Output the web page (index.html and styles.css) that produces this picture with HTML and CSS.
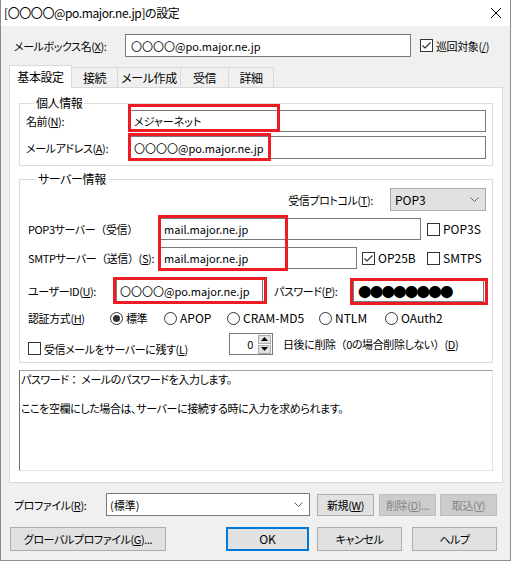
FILE: index.html
```html
<!DOCTYPE html>
<html lang="ja">
<head>
    <meta charset="utf-8">
    <title>設定</title>
    <link rel="stylesheet" href="styles.css">
</head>
<body>
<div class="window">
    <div class="titlebar">
        <span class="title">[〇〇〇〇@po.major.ne.jp]の設定</span>
        <svg class="close" width="10" height="10" viewBox="0 0 10 10"><path d="M0 0L10 10M10 0L0 10" stroke="#000" stroke-width="1"/></svg>
    </div>
    <div class="client">
        <div class="mailbox-row">
            <span class="mailbox-label">メールボックス名(<u>X</u>):</span>
            <div class="textbox mailbox-input">〇〇〇〇@po.major.ne.jp</div>
            <span class="check on"><svg width="11" height="11" viewBox="0 0 11 11"><path d="M1.5 5.5L4 8L9.5 2.5" fill="none" stroke="#333" stroke-width="1.2"/></svg></span>
            <span class="check-text">巡回対象(<u>/</u>)</span>
        </div>

        <div class="tabs">
            <div class="tab active">基本設定</div>
            <div class="tab w-conn">接続</div>
            <div class="tab w-compose">メール作成</div>
            <div class="tab w-recv">受信</div>
            <div class="tab w-detail">詳細</div>
        </div>

        <div class="panel">
            <fieldset class="group group-personal">
                <legend>個人情報</legend>
                <div class="row">
                    <span class="lbl lbl-personal">名前(<u>N</u>):</span>
                    <div class="textbox input-personal">メジャーネット</div>
                </div>
                <div class="row row-mail">
                    <span class="lbl lbl-personal">メールアドレス(<u>A</u>):</span>
                    <div class="textbox input-personal">〇〇〇〇@po.major.ne.jp</div>
                </div>
            </fieldset>

            <fieldset class="group group-server">
                <legend>サーバー情報</legend>
                <div class="row row-proto">
                    <span class="lbl lbl-proto">受信プロトコル(<u>T</u>):</span>
                    <div class="combo combo-proto">
                        <span class="latin">POP3</span>
                        <svg width="9" height="5" viewBox="0 0 9 5"><path d="M0.5 0.5L4.5 4.5L8.5 0.5" fill="none" stroke="#606060"/></svg>
                    </div>
                </div>
                <div class="row row-server">
                    <span class="lbl lbl-server">POP3サーバー<span class="fw">（受信）</span></span>
                    <div class="textbox input-pop">mail.major.ne.jp</div>
                    <span class="check check-pop"></span>
                    <span class="check-text latin">POP3S</span>
                </div>
                <div class="row row-server">
                    <span class="lbl lbl-server">SMTPサーバー<span class="fw">（送信）</span>(<u>S</u>):</span>
                    <div class="textbox input-smtp">mail.major.ne.jp</div>
                    <div class="opt opt-op25b">
                        <span class="check on"><svg width="11" height="11" viewBox="0 0 11 11"><path d="M1.5 5.5L4 8L9.5 2.5" fill="none" stroke="#333" stroke-width="1.2"/></svg></span>
                        <span class="check-text latin">OP25B</span>
                    </div>
                    <div class="opt">
                        <span class="check"></span>
                        <span class="check-text latin">SMTPS</span>
                    </div>
                </div>
                <div class="row row-user">
                    <span class="lbl lbl-user">ユーザーID(<u>U</u>):</span>
                    <div class="textbox input-user">〇〇〇〇@po.major.ne.jp</div>
                    <span class="lbl lbl-pass">パスワード(<u>P</u>):</span>
                    <div class="textbox input-pass">●●●●●●●●</div>
                </div>
                <div class="row row-auth">
                    <span class="lbl lbl-auth">認証方式(<u>H</u>)</span>
                    <div class="opt opt-std"><span class="radio on"></span><span class="check-text">標準</span></div>
                    <div class="opt opt-apop"><span class="radio"></span><span class="check-text latin">APOP</span></div>
                    <div class="opt opt-cram"><span class="radio"></span><span class="check-text latin">CRAM-MD5</span></div>
                    <div class="opt opt-ntlm"><span class="radio"></span><span class="check-text latin">NTLM</span></div>
                    <div class="opt"><span class="radio"></span><span class="check-text latin">OAuth2</span></div>
                </div>
                <div class="row row-keep">
                    <div class="opt opt-keep">
                        <span class="check"></span>
                        <span class="check-text">受信メールをサーバーに残す(<u>L</u>)</span>
                    </div>
                    <div class="spin">
                        <div class="spin-value">0</div>
                        <div class="spin-buttons">
                            <div class="spin-btn"><svg width="7" height="4" viewBox="0 0 7 4"><path d="M0 4L3.5 0L7 4Z" fill="#000"/></svg></div>
                            <div class="spin-btn"><svg width="7" height="4" viewBox="0 0 7 4"><path d="M0 0L3.5 4L7 0Z" fill="#000"/></svg></div>
                        </div>
                    </div>
                    <span class="days">日後に削除<span class="fw">（</span>0の場合削除しない<span class="fw">）</span>(<u>D</u>)</span>
                </div>
            </fieldset>

            <div class="description">パスワード<span class="fw">：</span> メールのパスワードを入力します。<br><br>ここを空欄にした場合は、サーバーに接続する時に入力を求められます。</div>
        </div>

        <div class="profile-row">
            <span class="lbl lbl-profile">プロファイル(<u>R</u>):</span>
            <div class="combo combo-profile">
                <span>(標準)</span>
                <svg width="9" height="5" viewBox="0 0 9 5"><path d="M0.5 0.5L4.5 4.5L8.5 0.5" fill="none" stroke="#606060"/></svg>
            </div>
            <button class="btn btn-small btn-new">新規(<u>W</u>)</button>
            <button class="btn btn-small btn-del" disabled>削除(<u>D</u>)...</button>
            <button class="btn btn-small btn-import" disabled>取込(<u>Y</u>)</button>
        </div>

        <div class="button-row">
            <button class="btn btn-global">グローバルプロファイル(<u>G</u>)...</button>
            <button class="btn btn-ok latin">OK</button>
            <button class="btn btn-cancel">キャンセル</button>
            <button class="btn btn-help">ヘルプ</button>
        </div>
    </div>

    <!-- red annotation frames -->
    <div class="mark mark-name"></div>
    <div class="mark mark-mail"></div>
    <div class="mark mark-server"></div>
    <div class="mark mark-user"></div>
    <div class="mark mark-pass"></div>
</div>
</body>
</html>
```

FILE: styles.css
```css
body {
    margin: 0;
    padding: 0;
    background-color: #f0f0f0;
    font-family: "Noto Sans CJK JP", "Noto Sans", sans-serif;
    font-size: 11px;
    font-feature-settings: "palt";
    letter-spacing: -0.4px;
    color: #000;
}
u {
    text-decoration: underline;
    text-underline-offset: 1px;
}
.fw {
    font-feature-settings: normal;
}
.latin {
    font-size: 12px;
    letter-spacing: 0;
}
.window {
    position: relative;
    width: 511px;
    height: 561px;
    box-sizing: border-box;
    border: 1px solid #8c8c8c;
    border-top: none;
    background-color: #f0f0f0;
    overflow: hidden;
}
.titlebar {
    height: 26px;
    background-color: #fff;
    display: flex;
    align-items: center;
    justify-content: space-between;
    padding: 0 9px 0 3px;
}
.title {
    font-size: 12px;
    line-height: 14px;
}
.client {
    padding: 0 8px;
}

/* shared controls */
.textbox {
    box-sizing: border-box;
    height: 22px;
    background-color: #fff;
    border: 1px solid #7a7a7a;
    display: flex;
    align-items: center;
    padding-left: 3px;
    line-height: 14px;
    letter-spacing: 0;
    white-space: nowrap;
    overflow: hidden;
}
.lbl {
    line-height: 14px;
    white-space: nowrap;
    flex-shrink: 0;
}
.check {
    width: 13px;
    height: 13px;
    box-sizing: border-box;
    border: 1px solid #333;
    background-color: #fff;
    display: inline-flex;
    align-items: center;
    justify-content: center;
    flex-shrink: 0;
}
.check-text {
    margin-left: 3px;
    line-height: 14px;
    white-space: nowrap;
}
.radio {
    width: 13px;
    height: 13px;
    box-sizing: border-box;
    border: 1px solid #333;
    border-radius: 50%;
    background-color: #fff;
    display: inline-flex;
    align-items: center;
    justify-content: center;
    flex-shrink: 0;
}
.radio.on::after {
    content: "";
    width: 7px;
    height: 7px;
    border-radius: 50%;
    background-color: #333;
}
.opt {
    display: flex;
    align-items: center;
    flex-shrink: 0;
}
.combo {
    box-sizing: border-box;
    display: flex;
    align-items: center;
    justify-content: space-between;
    padding: 0 6px 0 4px;
    line-height: 14px;
    letter-spacing: 0;
}
.row {
    display: flex;
    align-items: center;
}

/* mailbox */
.mailbox-row {
    display: flex;
    align-items: center;
    height: 23px;
    margin-top: 8px;
    padding-left: 5px;
}
.mailbox-label {
    width: 111px;
    line-height: 14px;
    white-space: nowrap;
}
.mailbox-input {
    width: 286px;
    height: 23px;
    margin-right: 9px;
    padding-left: 5px;
}

/* tabs */
.tabs {
    display: flex;
    align-items: flex-end;
    height: 22px;
    margin-top: 8px;
}
.tab {
    box-sizing: border-box;
    height: 20px;
    border: 1px solid #d9d9d9;
    border-bottom: none;
    background-color: #f0f0f0;
    margin-left: -1px;
    display: flex;
    align-items: center;
    justify-content: center;
    line-height: 14px;
    font-size: 12px;
}
.tab.active {
    position: relative;
    z-index: 1;
    width: 63px;
    height: 23px;
    margin-left: 0;
    margin-bottom: -1px;
    background-color: #fff;
}
.w-conn { width: 47px; }
.w-compose { width: 64px; }
.w-recv { width: 49px; }
.w-detail { width: 46px; }

/* panel */
.panel {
    box-sizing: border-box;
    width: 494px;
    height: 396px;
    border: 1px solid #d9d9d9;
    background-color: #fff;
    padding: 0 9px;
}
.group {
    box-sizing: border-box;
    width: 474px;
    margin: 0;
    border: 1px solid #dcdcdc;
    padding: 0;
}
.group legend {
    margin-left: 8px;
    padding: 0 2px;
    line-height: 14px;
    font-size: 12px;
}
.group-personal {
    margin-top: 8px;
    padding: 0 0 6px 6px;
}
.group-personal .row {
    height: 22px;
}
.group-personal .row-mail {
    margin-top: 4px;
    height: 23px;
}
.row-mail .textbox {
    height: 23px;
}
.lbl-personal {
    width: 104px;
}
.input-personal {
    width: 356px;
}

.group-server {
    margin-top: 6px;
    padding: 0 0 7px 8px;
}
.row-proto {
    margin-top: 2px;
    height: 23px;
}
.lbl-proto {
    width: 345px;
    text-align: right;
}
.combo-proto {
    width: 96px;
    height: 23px;
    margin-left: 17px;
    background-color: #e1e1e1;
    border: 1px solid #adadad;
}
.row-server {
    margin-top: 7px;
    height: 22px;
}
.lbl-server {
    width: 132px;
}
.input-pop {
    width: 261px;
    margin-right: 6px;
}
.input-smtp {
    width: 197px;
    margin-right: 5px;
}
.opt-op25b {
    width: 65px;
}
.row-user {
    margin-top: 10px;
    height: 23px;
}
.row-user .textbox {
    height: 23px;
}
.lbl-user {
    width: 88px;
}
.input-user {
    width: 147px;
}
.lbl-pass {
    width: 79px;
    margin-left: 11px;
}
.input-pass {
    width: 131px;
    font-size: 13.5px;
    letter-spacing: -1.8px;
    padding-left: 4px;
}
.row-auth {
    margin-top: 8px;
    height: 16px;
}
.lbl-auth {
    width: 82px;
}
.opt-std { width: 54px; }
.opt-apop { width: 63px; }
.opt-cram { width: 92px; }
.opt-ntlm { width: 66px; }
.row-keep {
    margin-top: 7px;
    height: 22px;
}
.opt-keep {
    width: 201px;
    margin-top: 9px;
}
.spin {
    box-sizing: border-box;
    width: 44px;
    height: 22px;
    border: 1px solid #7a7a7a;
    background-color: #fff;
    display: flex;
    align-items: center;
}
.spin-value {
    flex: 1;
    text-align: right;
    padding-right: 5px;
    line-height: 14px;
}
.spin-buttons {
    display: flex;
    flex-direction: column;
    gap: 1px;
    margin-right: 1px;
}
.spin-btn {
    box-sizing: border-box;
    width: 13px;
    height: 9px;
    background-color: #e1e1e1;
    border: 1px solid #adadad;
    display: flex;
    align-items: center;
    justify-content: center;
}
.days {
    margin-left: 10px;
    line-height: 14px;
    white-space: nowrap;
}

.description {
    box-sizing: border-box;
    width: 474px;
    height: 101px;
    margin-top: 7px;
    border: 1px solid #e3e3e3;
    border-top-color: #a0a0a0;
    border-left-color: #6f6f6f;
    padding: 1px 0 0 1px;
    line-height: 14.5px;
    white-space: nowrap;
}

/* profile + buttons */
.profile-row {
    display: flex;
    align-items: center;
    height: 23px;
    margin-top: 10px;
    padding-left: 5px;
}
.lbl-profile {
    width: 92px;
}
.combo-profile {
    width: 204px;
    height: 23px;
    background-color: #fff;
    border: 1px solid #7a7a7a;
    padding-left: 3px;
}
.btn {
    box-sizing: border-box;
    font-family: inherit;
    font-size: 11px;
    font-feature-settings: "palt";
    letter-spacing: -0.4px;
    line-height: 14px;
    color: #000;
    background-color: #e1e1e1;
    border: 1px solid #adadad;
    padding: 0;
    margin: 0;
    white-space: nowrap;
}
.btn.latin {
    font-size: 12px;
    letter-spacing: 0;
}
.btn:disabled {
    color: #838383;
    background-color: #cccccc;
    border-color: #bfbfbf;
}
.btn-small {
    width: 57px;
    height: 22px;
}
.btn-new { margin-left: 7px; }
.btn-del { margin-left: 5px; }
.btn-import { margin-left: 4px; }

.button-row {
    display: flex;
    align-items: center;
    margin-top: 11px;
    height: 24px;
}
.button-row .btn {
    height: 24px;
}
.btn-global {
    width: 156px;
    margin-left: 1px !important;
}
.btn-ok {
    width: 83px;
    margin-left: 60px !important;
    border: 2px solid #0078d7;
}
.btn-cancel {
    width: 85px;
    margin-left: 8px !important;
}
.btn-help {
    width: 85px;
    margin-left: 10px !important;
}

/* red annotation frames drawn over the form */
.mark {
    position: absolute;
    box-sizing: border-box;
    border: 3px solid #ed1c24;
}
.mark-name { left: 127px; top: 104px; width: 152px; height: 28px; }
.mark-mail { left: 127px; top: 133px; width: 143px; height: 28px; }
.mark-server { left: 157px; top: 215px; width: 130px; height: 56px; }
.mark-user { left: 112px; top: 277px; width: 154px; height: 27px; }
.mark-pass { left: 349px; top: 278px; width: 138px; height: 27px; }
```
